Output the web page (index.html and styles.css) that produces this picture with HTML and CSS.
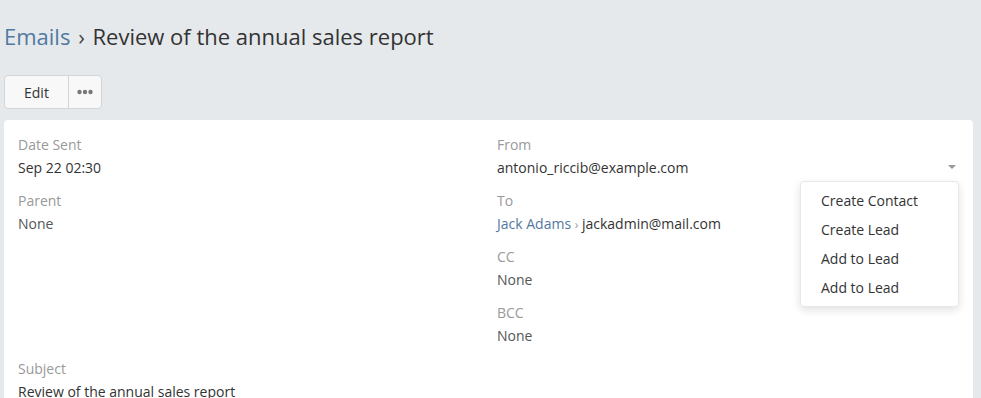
FILE: index.html
```html
<!DOCTYPE html>
<html lang="en">
<head>
  <meta charset="UTF-8">
  <meta name="viewport" content="width=device-width, initial-scale=1.0">
  <title>Review of the annual sales report</title>
  <link rel="stylesheet" href="styles.css">
</head>
<body>
  <div class="page">
    <!-- En-tete -->
    <h1 class="page-title"><a href="#">Emails</a> <span class="sep">›</span> Review of the annual sales report</h1>

    <div class="btn-group">
      <button class="btn">Edit</button>
      <button class="btn btn-more">
        <svg width="16" height="6" viewBox="0 0 16 6"><circle cx="2.5" cy="3" r="2.2"/><circle cx="8" cy="3" r="2.2"/><circle cx="13.5" cy="3" r="2.2"/></svg>
      </button>
    </div>

    <!-- Detail -->
    <div class="panel">
      <div class="columns">
        <div class="col-left">
          <div class="field">
            <div class="label">Date Sent</div>
            <div class="value">Sep 22 02:30</div>
          </div>
          <div class="field">
            <div class="label">Parent</div>
            <div class="value muted">None</div>
          </div>
        </div>
        <div class="col-right">
          <div class="field field-from">
            <div class="label">From</div>
            <div class="value value-toggle">
              <span>antonio_riccib@example.com</span>
              <span class="caret"></span>
            </div>
            <ul class="dropdown-menu">
              <li><a href="#">Create Contact</a></li>
              <li><a href="#">Create Lead</a></li>
              <li><a href="#">Add to Lead</a></li>
              <li><a href="#">Add to Lead</a></li>
            </ul>
          </div>
          <div class="field">
            <div class="label">To</div>
            <div class="value"><a href="#">Jack Adams</a> <span class="small-sep">›</span> jackadmin@mail.com</div>
          </div>
          <div class="field">
            <div class="label">CC</div>
            <div class="value muted">None</div>
          </div>
          <div class="field">
            <div class="label">BCC</div>
            <div class="value muted">None</div>
          </div>
        </div>
      </div>
      <div class="field">
        <div class="label">Subject</div>
        <div class="value">Review of the annual sales report</div>
      </div>
    </div>
  </div>
</body>
</html>
```

FILE: styles.css
```css
body {
  margin: 0;
  background-color: #e6e9ec;
  color: #333;
  font-family: "Open Sans", sans-serif;
  font-size: 14px;
  overflow: hidden;
}

a {
  color: #5179a0;
  text-decoration: none;
}

.page {
  padding: 21px 8px 0 4px;
}

.page-title {
  margin: 0;
  font-size: 22px;
  font-weight: normal;
  line-height: 30px;
  color: #333;
}
.page-title .sep {
  margin: 0 2px;
  color: #444;
}

.btn-group {
  display: flex;
  margin-top: 24px;
}
.btn {
  height: 34px;
  padding: 0 19px;
  background-color: #f8f8f8;
  border: 1px solid #d4d4d4;
  border-radius: 4px 0 0 4px;
  color: #333;
  font-family: inherit;
  font-size: 14px;
  cursor: pointer;
}
.btn-more {
  display: flex;
  align-items: center;
  justify-content: center;
  width: 34px;
  padding: 0;
  margin-left: -1px;
  border-radius: 0 4px 4px 0;
}
.btn-more svg {
  fill: #777;
}

.panel {
  margin-top: 11px;
  padding: 15px 14px 20px;
  background-color: #fff;
  border-radius: 4px;
}

.columns {
  display: grid;
  grid-template-columns: 479px 1fr;
}

.field {
  padding-bottom: 13px;
}
.field-from {
  position: relative;
}
.label {
  line-height: 20px;
  color: #999;
}
.value {
  margin-top: 3px;
  line-height: 20px;
  color: #333;
}
.value.muted {
  color: #555;
}
.value-toggle {
  display: flex;
  align-items: center;
  justify-content: space-between;
}
.caret {
  width: 0;
  height: 0;
  margin: 0 3px 2px 0;
  border-left: 4px solid transparent;
  border-right: 4px solid transparent;
  border-top: 4px solid #999;
}
.small-sep {
  font-size: 12px;
  line-height: 1;
  color: #999;
}

.dropdown-menu {
  position: absolute;
  top: 46px;
  right: 0;
  width: 157px;
  margin: 0;
  padding: 4px 0;
  list-style: none;
  background-color: #fff;
  border: 1px solid #e8e8e8;
  border-radius: 4px;
  box-shadow: 0 3px 8px rgba(0, 0, 0, 0.12);
}
.dropdown-menu a {
  display: block;
  padding: 0 20px;
  line-height: 29px;
  color: #333;
}
```
